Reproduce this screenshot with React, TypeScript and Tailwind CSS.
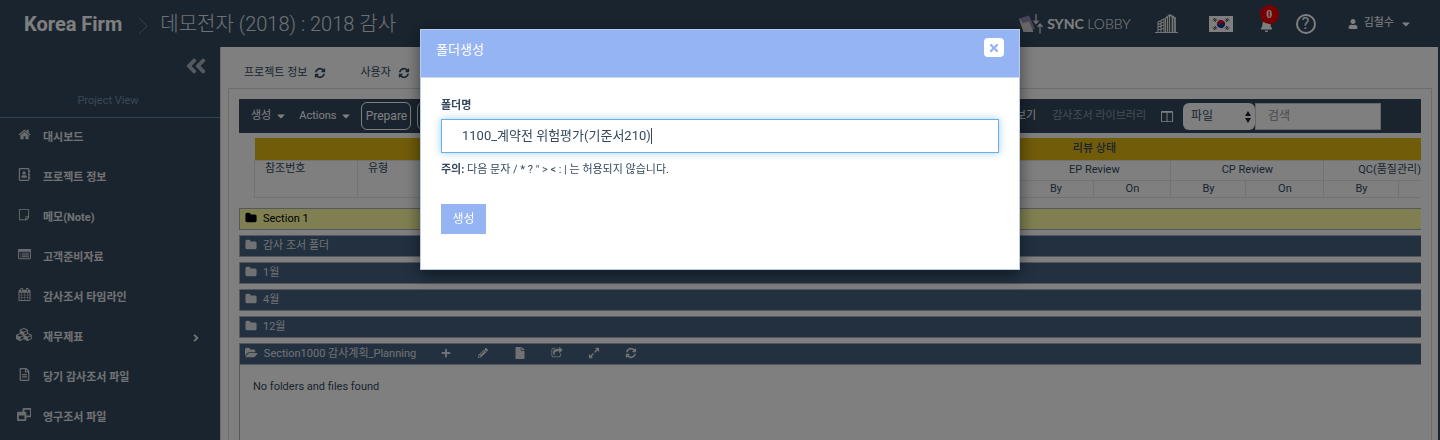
import type { ReactNode } from "react";
import {
  FaAngleDoubleLeft, FaAngleRight, FaBell, FaCaretDown, FaFile, FaPencilAlt, FaPlus,
  FaRegAddressBook, FaRegFileAlt, FaTimes, FaUser,
} from "react-icons/fa";

function Glyph({ d, wide = 1792 }: { d: string; wide?: number }) {
  return (
    <svg viewBox={`0 0 ${wide} 1792`} height="1em" fill="currentColor" className="shrink-0" aria-hidden="true">
      <path d={d} />
    </svg>
  );
}

const Refresh = () => (
  <Glyph d="M1639 1056q0 5-1 7-64 268-268 434.5t-478 166.5q-146 0-282.5-55t-243.5-157l-129 129q-19 19-45 19t-45-19-19-45v-448q0-26 19-45t45-19h448q26 0 45 19t19 45-19 45l-137 137q71 66 161 102t187 36q134 0 250-65t186-179q11-17 53-117 8-23 30-23h192q13 0 22.5 9.5t9.5 22.5zm25-800v448q0 26-19 45t-45 19h-448q-26 0-45-19t-19-45 19-45l138-138q-148-137-349-137-134 0-250 65t-186 179q-11 17-53 117-8 23-30 23h-199q-13 0-22.5-9.5t-9.5-22.5v-7q65-268 270-434.5t480-166.5q146 0 284 55.5t245 156.5l130-129q19-19 45-19t45 19 19 45z" />
);
const Home = () => (
  <Glyph d="M1472 992v480q0 26-19 45t-45 19h-384v-384h-256v384h-384q-26 0-45-19t-19-45v-480q0-1 .5-3t.5-3l575-474 575 474q1 2 1 6zm223-69l-62 74q-8 9-21 11h-3q-13 0-21-7l-692-577-692 577q-12 8-24 7-13-2-21-11l-62-74q-8-10-7-23.5t11-21.5l719-599q32-26 76-26t76 26l244 204v-195q0-14 9-23t23-9h192q14 0 23 9t9 23v408l219 182q10 8 11 21.5t-7 23.5z" />
);
const Note = () => (
  <Glyph
    wide={1664}
    d="M224 128h1216q40 0 68 28t28 68v1056q0 40-20 88t-48 76l-184 184q-28 28-76 48t-88 20h-896q-40 0-68-28t-28-68v-1376q0-40 28-68t68-28zm32 128v1312h768v-320q0-40 28-68t68-28h288v-896zm896 1024v248q29-10 41-22l185-185q12-12 22-41z"
  />
);
const ListAlt = () => (
  <Glyph d="M256 640h128v128h-128zM256 896h128v128h-128zM256 1152h128v128h-128zM512 640h1024v128h-1024zM512 896h1024v128h-1024zM512 1152h1024v128h-1024zM1664 1376v-832q0-13-9.5-22.5t-22.5-9.5h-1472q-13 0-22.5 9.5t-9.5 22.5v832q0 13 9.5 22.5t22.5 9.5h1472q13 0 22.500-9.500t9.500-22.500zm128-1088v1088q0 66-47 113t-113 47h-1472q-66 0-113-47t-47-113v-1088q0-66 47-113t113-47h1472q66 0 113 47t47 113z" />
);
const Calendar = () => (
  <Glyph d="M192 1664h288v-288h-288v288zm352 0h320v-288h-320v288zm-352-352h288v-320h-288v320zm352 0h320v-320h-320v320zm-352-384h288v-288h-288v288zm736 736h320v-288h-320v288zm-384-736h320v-288h-320v288zm768 736h288v-288h-288v288zm-384-352h320v-320h-320v320zm-352-864v-288q0-13-9.5-22.5t-22.5-9.5h-64q-13 0-22.5 9.5t-9.5 22.5v288q0 13 9.5 22.5t22.5 9.5h64q13 0 22.5-9.5t9.5-22.5zm736 864h288v-320h-288v320zm-384-384h320v-288h-320v288zm384 0h288v-288h-288v288zm32-480v-288q0-13-9.5-22.5t-22.5-9.5h-64q-13 0-22.5 9.5t-9.5 22.5v288q0 13 9.5 22.5t22.5 9.5h64q13 0 22.5-9.5t9.5-22.5zm384-64v1280q0 52-38 90t-90 38h-1408q-52 0-90-38t-38-90v-1280q0-52 38-90t90-38h128v-96q0-66 47-113t113-47h64q66 0 113 47t47 113v96h384v-96q0-66 47-113t113-47h64q66 0 113 47t47 113v96h128q52 0 90 38t38 90z" />
);
const Cubes = () => (
  <Glyph
    wide={2304}
    d="M640 1632l384-192v-314l-384 164v342zm-64-454l404-173-404-173-404 173zm1088 454l384-192v-314l-384 164v342zm-64-454l404-173-404-173-404 173zm-448-293l384-165v-266l-384 164v267zm-64-379l441-189-441-189-441 189zm1088 518v416q0 36-19 67t-52 47l-448 224q-25 14-57 14t-57-14l-448-224q-4-2-7-4-2 2-7 4l-448 224q-25 14-57 14t-57-14l-448-224q-33-16-52-47t-19-67v-416q0-38 21.5-70t56.5-48l434-186v-400q0-38 21.5-70t56.5-48l448-192q23-10 50-10t50 10l448 192q35 16 56.5 48t21.5 70v400l434 186q36 16 57 48t21 70z"
  />
);
const Windows = () => (
  <Glyph
    wide={2048}
    d="M256 1536h768v-512h-768v512zm1024-512h512v-768h-768v256h96q66 0 113 47t47 113v352zm768-864v960q0 66-47 113t-113 47h-608v352q0 66-47 113t-113 47h-960q-66 0-113-47t-47-113v-960q0-66 47-113t113-47h608v-352q0-66 47-113t113-47h960q66 0 113 47t47 113z"
  />
);
const Folder = () => (
  <Glyph d="M1728 608v704q0 92-66 158t-158 66h-1216q-92 0-158-66t-66-158v-960q0-92 66-158t158-66h320q92 0 158 66t66 158v32h672q92 0 158 66t66 158z" />
);
const FolderOpen = () => (
  <Glyph
    wide={1920}
    d="M1879 952q0 31-31 66l-336 396q-43 51-120.5 86.5t-143.5 35.5h-1088q-34 0-60.5-13t-26.5-43q0-31 31-66l336-396q43-51 120.5-86.5t143.5-35.5h1088q34 0 60.5 13t26.5 43zm-343-344v160h-832q-94 0-197 47.5t-164 119.5l-337 396-5 6q0-4-.5-12.5t-.5-12.5v-960q0-92 66-158t158-66h320q92 0 158 66t66 158v32h544q92 0 158 66t66 158z"
  />
);
const Share = () => (
  <Glyph d="M1472 989v259q0 119-84.5 203.5t-203.5 84.5h-832q-119 0-203.5-84.5t-84.5-203.5v-832q0-119 84.5-203.5t203.5-84.5h255q13 0 22.5 9.5t9.5 22.5q0 27-26 32-77 26-133 60-10 4-16 4h-112q-66 0-113 47t-47 113v832q0 66 47 113t113 47h832q66 0 113-47t47-113v-214q0-19 18-29 28-13 54-37 16-16 35-8 21 9 21 29zm237-496l-384 384q-18 19-45 19-12 0-25-5-39-17-39-59v-192h-160q-323 0-438 131-119 137-74 473 3 23-20 34-8 2-12 2-16 0-26-13-10-14-21-31t-39.5-68.5-49.5-99.5-38.5-114-17.5-122q0-49 3.5-91t14-90 28-88 47-81.5 68.5-74 94.5-61.5 124.5-48.5 159.5-30.5 196.5-11h160v-192q0-42 39-59 13-5 25-5 26 0 45 19l384 384q19 19 19 45t-19 45z" />
);
const Expand = () => (
  <Glyph d="M883 1056q0 13-10 23l-332 332 144 144q19 19 19 45t-19 45-45 19h-448q-26 0-45-19t-19-45v-448q0-26 19-45t45-19 45 19l144 144 332-332q10-10 23-10t23 10l114 114q10 10 10 23zm781-864v448q0 26-19 45t-45 19-45-19l-144-144-332 332q-10 10-23 10t-23-10l-114-114q-10-10-10-23t10-23l332-332-144-144q-19-19-19-45t19-45 45-19h448q26 0 45 19t19 45z" />
);
const Columns = () => (
  <Glyph d="M160 1536h608v-1152h-640v1120q0 13 9.500 22.500t22.500 9.500zm1376-32v-1120h-640v1152h608q13 0 22.500-9.500t9.500-22.500zm128-1216v1216q0 66-47 113t-113 47h-1344q-66 0-113-47t-47-113v-1216q0-66 47-113t113-47h1344q66 0 113 47t47 113z" />
);

function SyncMark() {
  return (
    <svg viewBox="0 0 24 20" className="h-5 w-6" aria-hidden="true">
      <path d="M0 4.500 10 1.500 16 15 4.500 18Z" fill="#8c86b4" />
      <path d="M0 4.500 4.500 18 14.500 18 10 7.500 4 9Z" fill="#cfcfcf" />
      <path d="M17 0v9M14.500 6.500 17 9.500l2.500-3M21 19.500v-9M18.500 13 21 10l2.500 3" fill="none" stroke="#e8e8e8" strokeWidth="1.200" />
    </svg>
  );
}

function Buildings() {
  return (
    <svg viewBox="0 0 24 20" className="h-5 w-6" fill="none" stroke="#e8e8e8" aria-hidden="true">
      <path d="M0 18.500h23" />
      <path d="M3 18V8l6-3v13M3 10.500l6-2.500M3 13l6-2M3 15.500l6-1M6 7v11" strokeWidth="1.100" />
      <path d="M10.500 18V4l4-3v17M12.500 3v15" strokeWidth="1.200" />
      <path d="M15 1l5 3v14M17.500 3v15" strokeWidth="1.800" />
    </svg>
  );
}

function KoreanFlag() {
  return (
    <svg viewBox="0 0 24 16" className="h-4 w-6" role="img" aria-label="한국어">
      <path fill="#fff" d="M0 0h24v16H0z" />
      <g transform="rotate(30 12 8)">
        <path fill="#d0103a" d="M8 8a4 4 0 0 1 8 0Z" />
        <path fill="#003a9b" d="M8 8a4 4 0 0 0 8 0Z" />
        <circle cx="10" cy="8" r="2" fill="#d0103a" />
        <circle cx="14" cy="8" r="2" fill="#003a9b" />
      </g>
      <g stroke="#111" strokeWidth="0.800">
        <path d="M4 4.500 6 2M5 5.300 7 2.800M5.900 6 7.900 3.500M18 2l2 2.500M17 2.800l2 2.500M16.100 3.500l2 2.500M4 11.500 6 14M5 10.700l2 2.500M5.900 10l2 2.500M18 14l2-2.500M17 13.200l2-2.500M16.100 12.500l2-2.500" />
      </g>
    </svg>
  );
}

const menu: { label: string; icon: ReactNode; more?: boolean }[] = [
  { label: "대시보드", icon: <Home /> },
  { label: "프로젝트 정보", icon: <FaRegAddressBook /> },
  { label: "메모(Note)", icon: <Note /> },
  { label: "고객준비자료", icon: <ListAlt /> },
  { label: "감사조서 타임라인", icon: <Calendar /> },
  { label: "재무제표", icon: <Cubes />, more: true },
  { label: "당기 감사조서 파일", icon: <FaRegFileAlt /> },
  { label: "영구조서 파일", icon: <Windows /> },
];

const folders = ["감사 조서 폴더", "1월", "4월", "12월"];

const folderActions = [
  { label: "추가", icon: <FaPlus className="size-2.5" /> },
  { label: "편집", icon: <FaPencilAlt className="size-2.5" /> },
  { label: "파일", icon: <FaFile /> },
  { label: "공유", icon: <Share /> },
  { label: "확장", icon: <Expand /> },
  { label: "새로고침", icon: <Refresh /> },
];

function Header() {
  return (
    <header className="flex h-[47px] items-center bg-[#34495e] pl-6 pr-7 text-white">
      <span className="text-xl font-bold">Korea Firm</span>
      <svg viewBox="0 0 10 18" className="ml-4 mt-1 h-[18px] w-2.5" fill="none" stroke="#6b7b8c" aria-hidden="true">
        <path d="M1 1l8 8-8 8" />
      </svg>
      <h1 className="ml-3 text-xl font-light text-[#dde1e5]">데모전자 (2018) : 2018 감사</h1>
      <div className="ml-auto flex items-center">
        <a href="#lobby" className="flex items-center gap-1 font-[Lato] text-sm">
          <SyncMark />
          <span><b>SYNC</b> <span className="font-light">LOBBY</span></span>
        </a>
        <button aria-label="회사" className="ml-6"><Buildings /></button>
        <button aria-label="언어" className="ml-[30px]"><KoreanFlag /></button>
        <button aria-label="알림" className="relative ml-[27px] flex h-6 w-3 items-end pb-1 text-[13px]">
          <FaBell className="shrink-0" />
          <span className="absolute -top-[7px] left-0 flex size-[19px] items-center justify-center rounded-full bg-[#f00000] font-['Liberation_Serif'] text-xs font-bold">0</span>
        </button>
        <button aria-label="도움말" className="ml-6 flex size-5 items-center justify-center rounded-full border-2 border-white text-base leading-none">?</button>
        <button className="ml-8 flex items-center gap-1.5 text-[11px]">
          <FaUser className="size-2.5" />
          김철수
          <FaCaretDown className="size-3" />
        </button>
      </div>
    </header>
  );
}

function Sidebar() {
  return (
    <aside className="w-[220px] shrink-0 bg-[#34495e] text-[#e2e5e8]">
      <div className="flex h-[38px] items-center justify-end pr-3">
        <button aria-label="메뉴 접기" className="text-2xl text-[#aab4be]"><FaAngleDoubleLeft /></button>
      </div>
      <div className="flex h-[33px] items-center justify-center border-b border-[#5d84a8] pr-1 text-[11px] text-[#7590ab]">
        Project View
      </div>
      <nav>
        {menu.map((m) => (
          <a key={m.label} href="#menu" className="flex h-10 items-center pl-4 pr-[18px] text-[11px] font-bold">
            <span className="flex w-4 justify-center pb-2 text-[13px] text-[#d4d7da]">{m.icon}</span>
            <span className="ml-[11px]">{m.label}</span>
            {m.more && <FaAngleRight className="ml-auto size-3" />}
          </a>
        ))}
      </nav>
    </aside>
  );
}

function Toolbar() {
  const outline = "h-7 w-[50px] rounded-md border border-white text-xs";
  return (
    <div className="flex h-[34px] items-center whitespace-nowrap bg-[#34495e] pl-3 pr-10 text-[11px] text-white">
      <button className="flex items-center gap-1">생성 <FaCaretDown className="size-3" /></button>
      <button className="ml-3 flex items-center gap-1">Actions <FaCaretDown className="size-3" /></button>
      <button className={`ml-[9px] ${outline}`}>Prepare</button>
      <button aria-label="검토" className={`ml-1.5 ${outline}`} />
      <button className="ml-auto">펼쳐보기</button>
      <button className="ml-4 text-[#8d9aa7]">감사조서 라이브러리</button>
      <button aria-label="열 보기" className="ml-[15px] text-[13px]"><Columns /></button>
      <div className="relative ml-[9px]">
        <select aria-label="검색 대상" className="h-[27px] w-[72px] appearance-none rounded-md bg-white pl-2 text-xs text-[#34495e]">
          <option>파일</option>
        </select>
        <svg viewBox="0 0 6 12" className="pointer-events-none absolute right-1 top-2 h-3 w-1.5" fill="#1b2733" aria-hidden="true">
          <path d="M3 0l3 5H0zM3 12l3-5H0z" />
        </svg>
      </div>
      <input aria-label="검색" placeholder="검색" className="h-[27px] w-[126px] border border-[#c8cdd3] bg-white px-3 text-xs placeholder:text-[#8f959c]" />
    </div>
  );
}

function StatusTable() {
  const cell = "border border-[#e4e4e4] p-0 font-normal";
  return (
    <div className="ml-[15px] mt-[5px]">
      <table className="w-full table-fixed border-collapse text-[11px] leading-4 text-[#34495e]">
        <colgroup>
          <col className="w-[103px]" /><col className="w-[104px]" /><col />
          <col className="w-[125px]" /><col className="w-[125px]" />
          <col className="w-[76px]" /><col className="w-[77px]" />
          <col className="w-[75px]" /><col className="w-[78px]" />
          <col className="w-[75px]" /><col className="w-[22px]" />
        </colgroup>
        <thead>
          <tr className="h-[22px] bg-[#e2b813]">
            <th colSpan={3} className="p-0" />
            <th colSpan={8} className="p-0 font-medium">리뷰 상태</th>
          </tr>
          <tr className="h-5">
            <th rowSpan={2} className={`${cell} pl-2.5 text-left align-top`}>참조번호</th>
            <th rowSpan={2} className={`${cell} pl-2.5 text-left align-top`}>유형</th>
            <th rowSpan={2} className={cell} />
            <th colSpan={2} className={cell} />
            <th colSpan={2} className={cell}>EP Review</th>
            <th colSpan={2} className={cell}>CP Review</th>
            <th colSpan={2} className={`${cell} border-r-0 text-right`}>QC(품질관리)</th>
          </tr>
          <tr className="h-[17px]">
            <th className={cell} /><th className={cell} />
            <th className={cell}>By</th><th className={cell}>On</th>
            <th className={cell}>By</th><th className={cell}>On</th>
            <th className={cell}>By</th><th className={`${cell} border-r-0`} />
          </tr>
        </thead>
      </table>
    </div>
  );
}

function Folders() {
  const row = "flex h-[22px] items-center border border-[#a9b0b8] border-r-0 pl-[5px] pt-px text-[11px]";
  return (
    <div className="mt-2.5 flex flex-col gap-[5px]">
      <div className={`${row} bg-[#ffffa3] text-black`}>
        <span className="pb-0.5 text-xs leading-none"><Folder /></span><span className="ml-1.5">Section 1</span>
      </div>
      {folders.map((f) => (
        <div key={f} className={`${row} bg-[#446180] text-[#e0e3e7]`}>
          <span className="pb-0.5 text-xs leading-none"><Folder /></span><span className="ml-1.5">{f}</span>
        </div>
      ))}
      <section>
        <div className={`${row} bg-[#446180] text-[#e0e3e7]`}>
          <span className="pb-0.5 text-xs leading-none"><FolderOpen /></span><span className="ml-1.5">Section1000 감사계획_Planning</span>
          <div className="ml-6 flex items-center gap-[25px] pb-0.5 text-xs">
            {folderActions.map((a) => (
              <button key={a.label} aria-label={a.label} className="flex w-3 justify-center">{a.icon}</button>
            ))}
          </div>
        </div>
        <p className="h-24 border-l border-[#a9b0b8] pl-[13px] pt-3.5 text-[11px] text-[#34495e]">No folders and files found</p>
      </section>
    </div>
  );
}

function CreateFolderDialog() {
  return (
    <div className="fixed inset-0 flex items-start justify-center bg-black/50 pt-[29px]">
      <div role="dialog" aria-modal="true" aria-labelledby="dialog-title" className="w-[600px] border border-[#b9cdea] bg-white text-[#34495e] shadow-[0_5px_15px_rgba(0,0,0,0.5)]">
        <div className="flex h-12 items-start justify-between border-b border-[#ccd8ee] bg-[#95b4f4] pl-[15px] pr-[15px] text-white">
          <h2 id="dialog-title" className="pt-2.5 text-[13px] leading-5">폴더생성</h2>
          <button aria-label="닫기" className="mt-2 flex h-[19px] w-5 items-center justify-center rounded-sm bg-white text-[#95b4f4]">
            <FaTimes className="size-3" />
          </button>
        </div>
        <form className="px-5 pb-[35px] pt-5" onSubmit={(e) => e.preventDefault()}>
          <label htmlFor="folder-name" className="block text-[11px] font-bold leading-4">폴더명</label>
          <div className="relative mt-[5px]">
            <input id="folder-name" autoFocus defaultValue="1100_계약전 위험평가(기준서210)" className="block h-[34px] w-full border border-[#66afe9] bg-white px-5 pb-1 text-[13px] text-[#34495e] caret-transparent shadow-[0_0_8px_rgba(102,175,233,0.6)] outline-none" />
            <span className="absolute left-[210px] top-[9px] h-4 w-px bg-[#34495e]" aria-hidden="true" />
          </div>
          <p className="mt-2 text-[11px] leading-[18px]">
            <b>주의:</b> 다음 문자 / * ? " &gt; &lt; : | 는 허용되지 않습니다.
          </p>
          <button className="mt-[25px] h-[30px] w-[45px] bg-[#95b4f4] text-xs text-white">생성</button>
        </form>
      </div>
    </div>
  );
}

export default function App() {
  return (
    <div className="flex h-screen flex-col overflow-hidden bg-[#34495e] font-[Roboto,'Noto_Sans_CJK_KR',sans-serif]">
      <Header />
      <div className="flex min-h-0 flex-1 pr-0.5">
        <Sidebar />
        <main className="min-w-0 flex-1 border-l border-[#d5d8dc] bg-white pl-[7px] pr-1.5">
          <div className="flex h-[41px] items-center gap-[34px] pl-4 pt-3 text-[11px] text-[#34495e]">
            <a href="#info" className="flex items-center gap-[7px]">프로젝트 정보 <span className="pb-0.5 text-xs leading-none"><Refresh /></span></a>
            <a href="#users" className="flex items-center gap-[7px]">사용자 <span className="pb-0.5 text-xs leading-none"><Refresh /></span></a>
          </div>
          <div className="h-full border border-[#d5d8dc] py-2.5 pl-2.5 pr-2.5">
            <Toolbar />
            <StatusTable />
            <Folders />
          </div>
        </main>
      </div>
      <CreateFolderDialog />
    </div>
  );
}
